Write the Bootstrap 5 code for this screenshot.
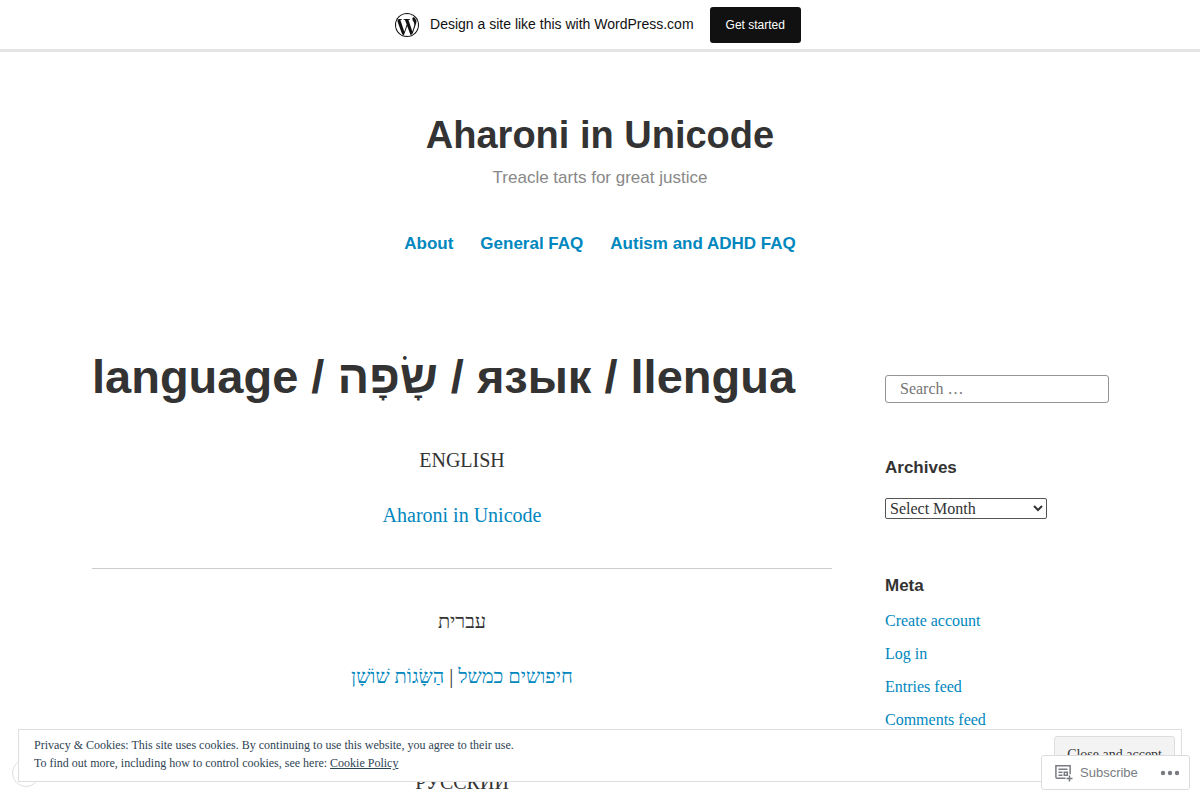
<!DOCTYPE html>
<html lang="en">
<head>
<meta charset="utf-8">
<meta name="viewport" content="width=device-width, initial-scale=1">
<title>language / שָׂפָה / язык / llengua – Aharoni in Unicode</title>
<link href="https://cdn.jsdelivr.net/npm/bootstrap@5.3.0/dist/css/bootstrap.min.css" rel="stylesheet">
<style>
  body { font-family: "Liberation Serif", serif; font-size: 20px; line-height: 30px; color: #333; background: #fff; }
  a { color: #0087be; text-decoration: none; }
  .sans { font-family: "Liberation Sans", sans-serif; }
  .promo { height: 52px; background: #fff; border-bottom: 3px solid #e5e5e5; font-size: 14px; line-height: 20px; color: #111; padding-right: 4px; }
  .promo .btn { background: #111; color: #fff; font-size: 12px; line-height: 18px; padding: 8px 15px; border-radius: 3px; }
  .promo-text { margin: 0 16px 2px 11px; }
  .masthead { padding-top: 110px; }
  .site-title { font-size: 38px; line-height: 50px; font-weight: 700; margin: 0; }
  .site-title a { color: #333; }
  .tagline { font-size: 17px; line-height: 24px; color: #888; margin: 6px 0 0; }
  .menu { font-size: 17px; line-height: 24px; font-weight: 700; margin-top: 42px; column-gap: 27px; }
  .page-wrap { max-width: 1066px; padding: 0 24px 0 25px; margin-top: 91px; }
  .main-col { flex: 1 1 0; min-width: 0; }
  .side-col { width: 224px; font-size: 16px; line-height: 24px; padding-top: 28px; }
  .columns { column-gap: 53px; }
  .entry-title { font-size: 47px; line-height: 60px; font-weight: 700; margin: 0 0 38px; }
  .entry p { margin: 0 0 25px; text-align: center; }
  .entry hr { margin: 38px 0 37px; border-top: 1px solid #ccc; opacity: 1; }
  .entry p:last-child { margin: 0; }
  .search-box { height: 28px; border: 1px solid #949494; border-radius: 3px; padding: 0 14px; font-size: 16px; line-height: 24px; color: #333; }
  .search-box::placeholder { color: #757575; }
  .widget-title { font-size: 17px; line-height: 24px; font-weight: 700; margin: 0; }
  .archive-widget { margin: 53px 0 55px; }
  .month { display: block; width: 162px; height: 21px; margin-top: 18px; font-size: 16px; line-height: 18px; color: #333; background: #fff; border: 1px solid #555; border-radius: 2px; padding: 0; }
  .meta-list { margin: 11px 0 0; }
  .meta-list li { margin-bottom: 9px; }
  .cookie { left: 18px; right: 18px; bottom: 18px; height: 53px; background: #fff; border: 1px solid #dedede; padding: 6px 6px 6px 15px; font-size: 12px; line-height: 18px; color: #2e4453; z-index: 20; }
  .cookie a { color: #2e4453; text-decoration: underline; }
  .cookie .btn { font-size: 14px; line-height: 20px; padding: 8px 12px; background: #f3f3f3; border: 1px solid #dedede; border-radius: 3px; color: #333; }
  .bubble { left: 12px; bottom: 13px; width: 28px; height: 28px; border: 1px solid #dedede; border-radius: 50%; background: #fff; z-index: 10; }
  .action-bar { right: 10px; bottom: 10px; width: 149px; height: 35px; background: #fff; border: 1px solid #dcdcde; border-radius: 3px; z-index: 30; font-size: 13px; padding: 0 9px 0 13px; }
  .action-bar button { background: none; border: 0; padding: 0; color: #787c82; column-gap: 7px; }
</style>
</head>
<body>
<div class="promo sans fixed-top d-flex align-items-center justify-content-center">
  <svg width="24" height="24" viewBox="2 2 20 20" aria-hidden="true">
    <circle cx="12" cy="12" r="10" fill="#111"/>
    <circle cx="12" cy="12" r="9.1" fill="#fff"/>
    <circle cx="12" cy="12" r="8.7" fill="#111"/>
    <path fill="#fff" d="M12.158,12.786L9.46,20.625c0.806,0.237,1.657,0.366,2.54,0.366c1.047,0,2.051-0.181,2.986-0.51c-0.024-0.038-0.046-0.079-0.065-0.124L12.158,12.786z M3.009,12c0,3.559,2.068,6.634,5.067,8.092L3.788,8.341C3.289,9.459,3.009,10.696,3.009,12z M18.069,11.546c0-1.112-0.399-1.881-0.741-2.48c-0.456-0.741-0.883-1.368-0.883-2.109c0-0.826,0.627-1.596,1.51-1.596c0.04,0,0.078,0.005,0.116,0.007C16.472,3.904,14.34,3.009,12,3.009c-3.141,0-5.904,1.612-7.512,4.052c0.211,0.007,0.41,0.011,0.579,0.011c0.94,0,2.396-0.114,2.396-0.114C7.947,6.93,8.004,7.642,7.52,7.699c0,0-0.487,0.057-1.029,0.085l3.274,9.739l1.968-5.901l-1.401-3.838C9.848,7.756,9.389,7.699,9.389,7.699C8.904,7.67,8.961,6.93,9.446,6.958c0,0,1.484,0.114,2.368,0.114c0.94,0,2.397-0.114,2.397-0.114c0.485-0.028,0.542,0.684,0.057,0.741c0,0-0.488,0.057-1.029,0.085l3.249,9.665l0.897-2.996C17.841,13.284,18.069,12.316,18.069,11.546z M19.889,7.686c0.039,0.286,0.06,0.593,0.06,0.924c0,0.912-0.171,1.938-0.684,3.22l-2.746,7.94c2.673-1.558,4.47-4.454,4.47-7.771C20.991,10.436,20.591,8.967,19.889,7.686z"/>
  </svg>
  <span class="promo-text">Design a site like this with WordPress.com</span>
  <button type="button" class="btn">Get started</button>
</div>

<header class="masthead sans text-center">
  <h1 class="site-title"><a href="#">Aharoni in Unicode</a></h1>
  <p class="tagline">Treacle tarts for great justice</p>
  <nav class="menu d-flex flex-wrap justify-content-center" aria-label="Primary">
    <a href="#">About</a>
    <a href="#">General FAQ</a>
    <a href="#">Autism and ADHD FAQ</a>
  </nav>
</header>

<div class="page-wrap mx-auto">
  <div class="columns d-flex">
    <main class="main-col">
      <h2 class="entry-title sans">language / שָׂפָה / язык / llengua</h2>
      <div class="entry">
        <p>ENGLISH</p>
        <p><a href="#">Aharoni in Unicode</a></p>
        <hr>
        <p lang="he" dir="rtl">עברית</p>
        <p lang="he" dir="rtl"><a href="#">חיפושים כמשל</a> | <a href="#">הַשָּׂגוֹת שׁוֹשָׁן</a></p>
        <hr>
        <p lang="ru">РУССКИЙ</p>
      </div>
    </main>
    <aside class="side-col">
      <form role="search">
        <input class="search-box d-block w-100" type="search" aria-label="Search" placeholder="Search …">
      </form>
      <section class="archive-widget">
        <h2 class="widget-title sans"><label for="month">Archives</label></h2>
        <select class="month" id="month"><option>Select Month</option></select>
      </section>
      <section>
        <h2 class="widget-title sans">Meta</h2>
        <ul class="meta-list list-unstyled">
          <li><a href="#">Create account</a></li>
          <li><a href="#">Log in</a></li>
          <li><a href="#">Entries feed</a></li>
          <li><a href="#">Comments feed</a></li>
        </ul>
      </section>
    </aside>
  </div>
</div>

<div class="bubble position-fixed"></div>

<div class="cookie position-fixed d-flex justify-content-between align-items-start">
  <div>Privacy &amp; Cookies: This site uses cookies. By continuing to use this website, you agree to their use.<br>
    To find out more, including how to control cookies, see here: <a href="#">Cookie Policy</a></div>
  <button type="button" class="btn">Close and accept</button>
</div>

<div class="action-bar sans position-fixed d-flex align-items-center justify-content-between">
  <button type="button" class="d-flex align-items-center">
    <svg width="18" height="18" viewBox="0 0 18 18" fill="none" stroke="#787c82" stroke-width="1.5" aria-hidden="true">
      <path d="M10.5 14.3H2.2Q.9 14.3.9 13V1.8h14.2v8.4M3.5 5.2h9M3.5 8.2h4M3.5 11.2h4M14.5 11.5v6M11.500 14.500h6"/>
      <path d="M9.300 8.200h3v3h-3z"/>
    </svg>
    <span>Subscribe</span>
  </button>
  <button type="button" aria-label="More options" class="d-flex">
    <svg width="20" height="6" viewBox="0 0 20 6" fill="#787c82" aria-hidden="true"><circle cx="3" cy="3" r="2.200"/><circle cx="10" cy="3" r="2.200"/><circle cx="17" cy="3" r="2.200"/></svg>
  </button>
</div>
<script src="https://cdn.jsdelivr.net/npm/bootstrap@5.3.0/dist/js/bootstrap.bundle.min.js"></script>
</body>
</html>
